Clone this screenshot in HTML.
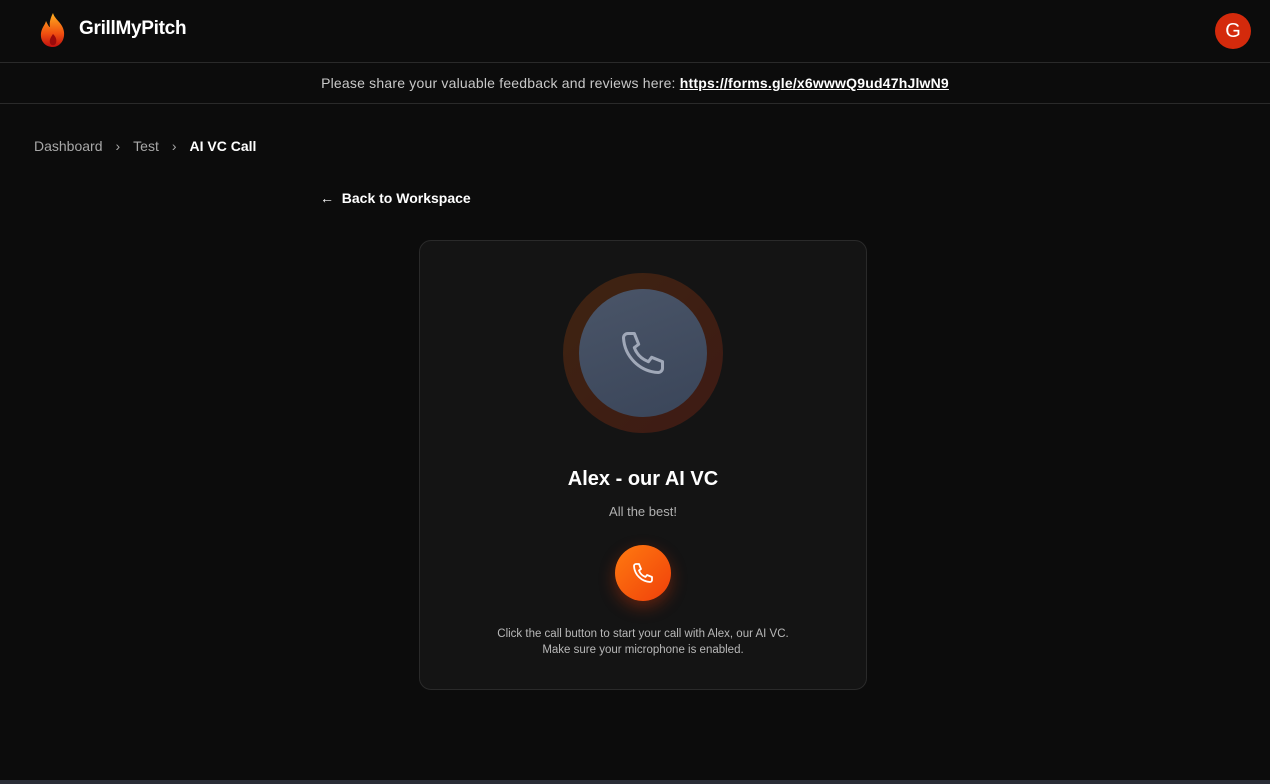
<!DOCTYPE html>
<html><head><meta charset="utf-8"><style>
*{margin:0;padding:0;box-sizing:border-box}
body{width:1270px;height:784px;background:#0c0c0c;font-family:"Liberation Sans",sans-serif;color:#fff;position:relative;overflow:hidden}
.hdr{height:63px;border-bottom:1px solid #2a2a2a;position:relative}
.logo{position:absolute;left:37px;top:12px}
.brand{position:absolute;left:79px;top:18px;font-size:19px;font-weight:bold;letter-spacing:-0.3px}
.av{position:absolute;right:19px;top:13px;width:36px;height:36px;border-radius:50%;background:#d42a0c;font-size:20px;text-align:center;line-height:36px}
.fb{height:41px;border-bottom:1px solid #2a2a2a;text-align:center;font-size:14px;color:#c8c8c8;line-height:40px;letter-spacing:0.2px}
.fb b{color:#fff;text-decoration:underline}
.bc{position:absolute;left:34px;top:138px;font-size:14px;color:#a8a8a8}
.bc span{margin:0 13px}
.bc b{color:#fff}
.back{position:absolute;left:320px;top:190px;font-size:14px;font-weight:bold}
.card{position:absolute;left:419px;top:240px;width:448px;height:450px;background:#141414;border:1px solid #2a2a2a;border-radius:12px;text-align:center}
.ring{position:absolute;left:143px;top:32px;width:160px;height:160px;border-radius:50%;background:linear-gradient(135deg,#3e2412,#3e1a14)}
.inner{position:absolute;left:16px;top:16px;width:128px;height:128px;border-radius:50%;background:linear-gradient(160deg,#4a5568,#3a4559)}
.t{position:absolute;left:0;right:0;top:227px;font-size:20px;font-weight:bold}
.s{position:absolute;left:0;right:0;top:263px;font-size:13px;color:#b0b0b0}
.btn{position:absolute;left:195px;top:304px;width:56px;height:56px;border-radius:50%;background:linear-gradient(135deg,#ff7a10,#f0400a);box-shadow:0 6px 16px rgba(240,60,10,.35)}
.n{position:absolute;left:0;right:0;top:385px;font-size:11.5px;color:#b8b8b8;line-height:16px}
.bot{position:absolute;left:0;right:0;bottom:0;height:4px;background:#2a2d36}
</style></head><body>
<div class="hdr">
<svg class="logo" width="32" height="36" viewBox="0 0 32 36"><defs><linearGradient id="f" x1="0" y1="0" x2="0" y2="1"><stop offset="0" stop-color="#ffb020"/><stop offset=".6" stop-color="#f05010"/><stop offset="1" stop-color="#c01010"/></linearGradient></defs><path d="M16 1C18 8 26 11 27 20C28 29 22 35 16 35C9 35 3 30 4 21C5 15 8 13 9 9C11 13 12 15 13 15C12 10 14 5 16 1Z" fill="url(#f)"/><path d="M16 22C19 25 20 28 19 31C18 34 14 34 13 31C12 28 14 25 16 22Z" fill="#9a0a0a"/></svg>
<div class="brand">GrillMyPitch</div>
<div class="av">G</div>
</div>
<div class="fb">Please share your valuable feedback and reviews here: <b>https://forms.gle/x6wwwQ9ud47hJlwN9</b></div>
<div class="bc">Dashboard<span>›</span>Test<span>›</span><b>AI VC Call</b></div>
<div class="back">← &nbsp;Back to Workspace</div>
<div class="card">
<div class="ring"><div class="inner"><svg style="margin-top:38px" width="52" height="52" viewBox="0 0 24 24" fill="none" stroke="#a0a8b8" stroke-width="1.4" stroke-linejoin="round"><path d="M5 3h3l2 5-2 1.5a11 11 0 0 0 6.5 6.5L16 14l5 2v3a2 2 0 0 1-2 2A17 17 0 0 1 3 5a2 2 0 0 1 2-2z"/></svg></div></div>
<div class="t">Alex - our AI VC</div>
<div class="s">All the best!</div>
<div class="btn"><svg style="margin-top:16px" width="24" height="24" viewBox="0 0 24 24" fill="none" stroke="#fff" stroke-width="1.8" stroke-linejoin="round"><path d="M5 3h3l2 5-2 1.5a11 11 0 0 0 6.5 6.5L16 14l5 2v3a2 2 0 0 1-2 2A17 17 0 0 1 3 5a2 2 0 0 1 2-2z"/></svg></div>
<div class="n">Click the call button to start your call with Alex, our AI VC.<br>Make sure your microphone is enabled.</div>
</div>
<div class="bot"></div>
</body></html>
